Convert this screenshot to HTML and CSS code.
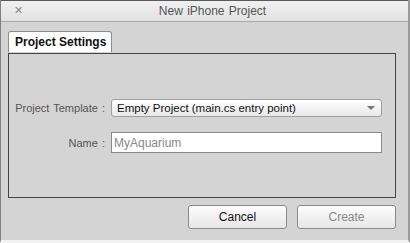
FILE: index.html
```html
<!DOCTYPE html>
<html lang="en">
<head>
    <meta charset="UTF-8">
    <title>New iPhone Project</title>
    <link rel="stylesheet" href="styles.css">
</head>
<body>

<div class="window">
    <div class="titlebar">
        <span class="close">&#x2715;</span>
        <span class="title">New iPhone Project</span>
    </div>

    <div class="content">
        <div class="tab">Project Settings</div>
        <div class="panel">
            <div class="form-grid">
                <label class="label">Project Template :</label>
                <div class="combo">
                    <span>Empty Project (main.cs entry point)</span>
                    <span class="arrow"></span>
                </div>

                <label class="label" for="name">Name :</label>
                <input type="text" id="name" class="text-input" value="MyAquarium">
            </div>
        </div>

        <div class="buttons">
            <button class="btn">Cancel</button>
            <button class="btn disabled">Create</button>
        </div>
    </div>
</div>

</body>
</html>
```

FILE: styles.css
```css
body {
    margin: 0;
    padding: 0;
    font-family: 'Liberation Sans', Arial, sans-serif;
    font-size: 12px;
    background-color: #6e6e6e;
}

.window {
    width: 407px;
    height: 240px;
    background-color: #d4d4d4;
    border-left: 1px solid #808080;
    border-right: 2px solid #9a9a9a;
    border-bottom: 3px solid #f2f2f2;
    display: flex;
    flex-direction: column;
}

.titlebar {
    height: 20px;
    border-top: 1px solid #5a5a5a;
    border-bottom: 1px solid #a8a8a8;
    background: linear-gradient(#f0f0f0, #e2e2e2);
    display: flex;
    align-items: center;
    justify-content: center;
    position: relative;
    color: #555;
    font-size: 12px;
    word-spacing: 1px;
}

.close {
    position: absolute;
    left: 13px;
    top: 3px;
    font-family: 'DejaVu Sans', sans-serif;
    font-size: 11px;
    color: #888;
}

.title {
    margin-left: 16px;
}

.content {
    padding: 9px 0 0 7px;
    display: flex;
    flex-direction: column;
}

.tab {
    width: 96px;
    height: 20px;
    padding-left: 6px;
    line-height: 21px;
    white-space: nowrap;
    background-color: #fff;
    border: 1px solid #8c8c8c;
    border-bottom: none;
    border-radius: 3px 3px 0 0;
    font-weight: bold;
    font-size: 12px;
    color: #111;
}

.panel {
    margin-top: 1px;
    width: 386px;
    height: 143px;
    border: 1px solid #444;
    display: flex;
    align-items: center;
}

.form-grid {
    display: grid;
    grid-template-columns: 96px 271px;
    column-gap: 6px;
    row-gap: 15px;
    align-items: center;
    margin-top: 1px;
}

.label {
    text-align: right;
    color: #555;
    font-size: 11px;
    word-spacing: 1px;
}

.combo {
    height: 16px;
    border: 1px solid #a0a0a0;
    border-radius: 3px;
    background: linear-gradient(#ffffff, #e8e8e8);
    display: flex;
    align-items: center;
    justify-content: space-between;
    padding: 0 6px 0 5px;
    color: #111;
    font-size: 11.5px;
    white-space: nowrap;
}

.arrow {
    width: 0;
    height: 0;
    border-left: 4px solid transparent;
    border-right: 4px solid transparent;
    border-top: 4px solid #777;
}

.text-input {
    box-sizing: border-box;
    width: 271px;
    height: 21px;
    margin: 0;
    border: 1px solid #8a8a8a;
    padding: 0 2px;
    background-color: #fff;
    font-family: 'Liberation Sans', Arial, sans-serif;
    font-size: 12px;
    color: #888;
    outline: none;
}

.buttons {
    display: flex;
    justify-content: flex-end;
    gap: 10px;
    width: 388px;
    margin-top: 7px;
}

.btn {
    width: 99px;
    height: 24px;
    border: 1px solid #8a8a8a;
    border-radius: 3px;
    background: linear-gradient(#fdfdfd, #e6e6e6);
    font-family: 'Liberation Sans', Arial, sans-serif;
    font-size: 12px;
    color: #111;
    padding: 0;
}

.btn.disabled {
    color: #888;
}
```
